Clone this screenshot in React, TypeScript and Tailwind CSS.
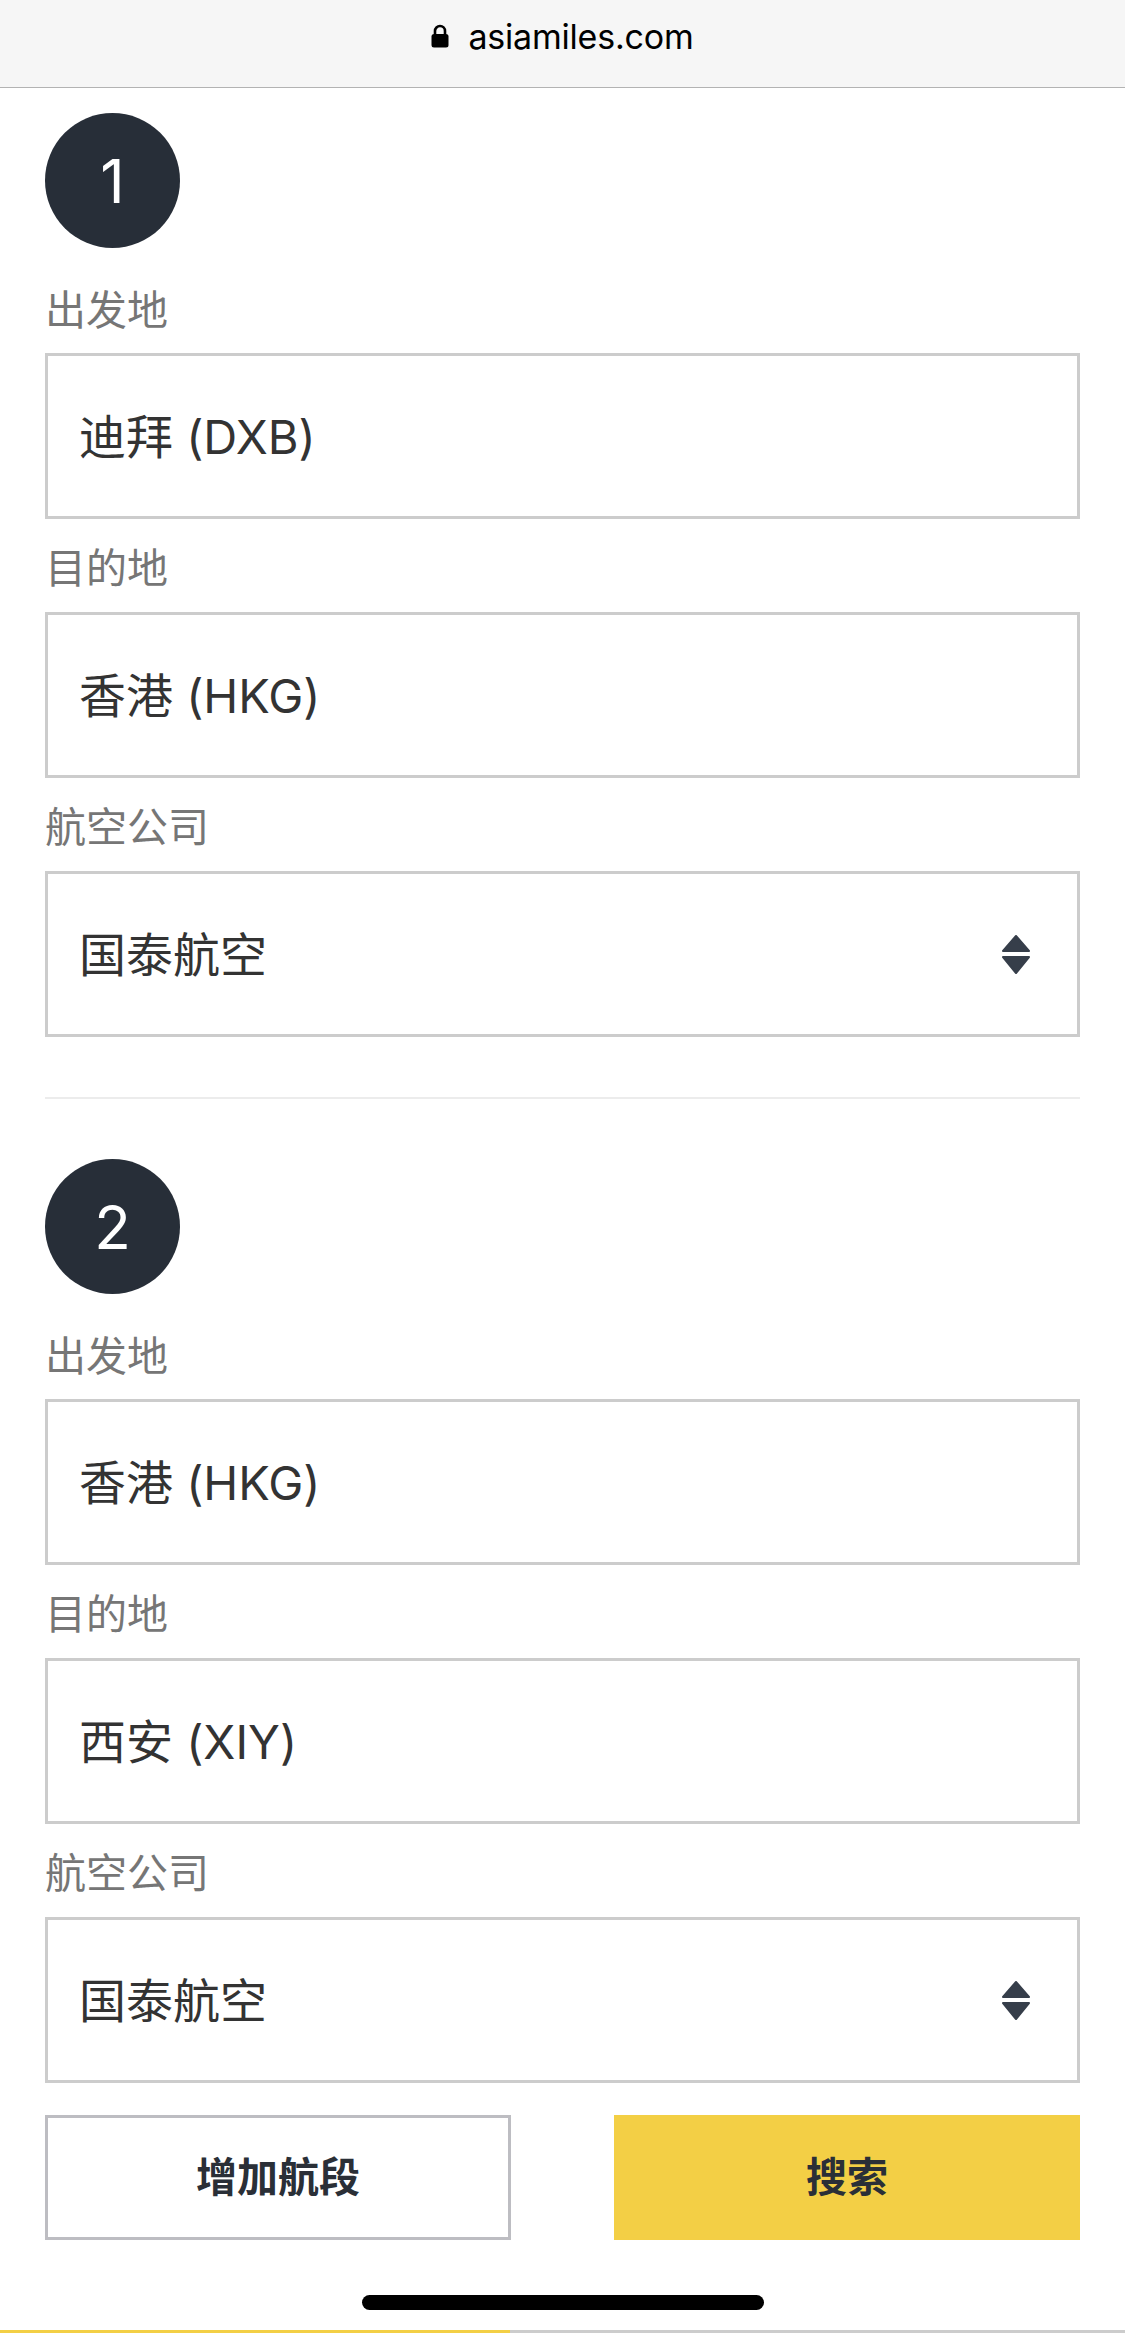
import type { FunctionComponent } from 'react';

type LabelProps = {
    text: string;
    first?: boolean;
};

const Label: FunctionComponent<LabelProps> = ({ text, first }) => {
    return (
        <div
            className={
                first
                    ? 'h-[105px] pt-[19px] flex items-center text-[41px] leading-none text-[#767676]'
                    : 'h-[93px] pt-[5px] flex items-center text-[41px] leading-none text-[#767676]'
            }
        >
            {text}
        </div>
    );
};

const SortArrows = () => (
    <svg width="28" height="39" viewBox="0 0 28 39" fill="#363e4a" stroke="#363e4a" strokeWidth="2" strokeLinejoin="round">
        <path d="M14 1 L27 16 L1 16 Z" />
        <path d="M1 22 L27 22 L14 38 Z" />
    </svg>
);

type FieldProps = {
    value: string;
    select?: boolean;
};

const Field: FunctionComponent<FieldProps> = ({ value, select }) => {
    return (
        <div className="h-[166px] border-[3px] border-[#cccccc] flex items-center justify-between pl-[31px] pr-[47px] text-[47px] leading-none text-[#333333]">
            <span>{value}</span>
            {select && <SortArrows />}
        </div>
    );
};

type SegmentProps = {
    n: number;
    from: string;
    to: string;
    airline: string;
};

const Segment: FunctionComponent<SegmentProps> = ({ n, from, to, airline }) => {
    return (
        <div>
            <div className="w-[135px] h-[135px] rounded-full bg-[#272e38] flex items-center justify-center text-white text-[60px] leading-none">
                {n}
            </div>
            <Label text="出发地" first />
            <Field value={from} />
            <Label text="目的地" />
            <Field value={to} />
            <Label text="航空公司" />
            <Field value={airline} select />
        </div>
    );
};

const Lock = () => (
    <svg width="18" height="24" viewBox="0 0 18 24">
        <path d="M4 10 V7 a5 5 0 0 1 10 0 V10" fill="none" stroke="#000" strokeWidth="2.6" />
        <rect x="0.5" y="10" width="17" height="13.5" rx="2.5" fill="#000" />
    </svg>
);

export default function App() {
    return (
        <div className="w-[1125px] h-[2333px] bg-white font-[Inter,'Noto_Sans_CJK_SC',sans-serif] flex flex-col">
            <div className="h-[88px] shrink-0 bg-[#f6f6f6] border-b border-[#b3b3b3] flex items-start justify-center pt-[18px] gap-[19px]">
                <div className="pt-[6px]">
                    <Lock />
                </div>
                <span className="text-[34px] leading-[38px] text-black tracking-[-0.2px]">asiamiles.com</span>
            </div>

            <div className="px-[45px] pt-[25px]">
                <Segment n={1} from="迪拜 (DXB)" to="香港 (HKG)" airline="国泰航空" />
                <div className="h-[2px] bg-[#ececec] my-[60px]" />
                <Segment n={2} from="香港 (HKG)" to="西安 (XIY)" airline="国泰航空" />

                <div className="mt-[32px] flex justify-between">
                    <button className="w-[466px] h-[125px] border-[3px] border-[#bdbdc2] bg-white text-[41px] font-bold text-[#2a2f37]">
                        增加航段
                    </button>
                    <button className="w-[466px] h-[125px] bg-[#f3cf45] text-[41px] font-bold text-[#2a2f37]">
                        搜索
                    </button>
                </div>
            </div>

            <div className="mt-[55px] mx-auto w-[402px] h-[15px] rounded-full bg-black" />
            <div className="mt-auto h-[3px] flex">
                <div className="w-[510px] bg-[#f3cf45]" />
                <div className="flex-1 bg-[#cccccc]" />
            </div>
        </div>
    );
}
